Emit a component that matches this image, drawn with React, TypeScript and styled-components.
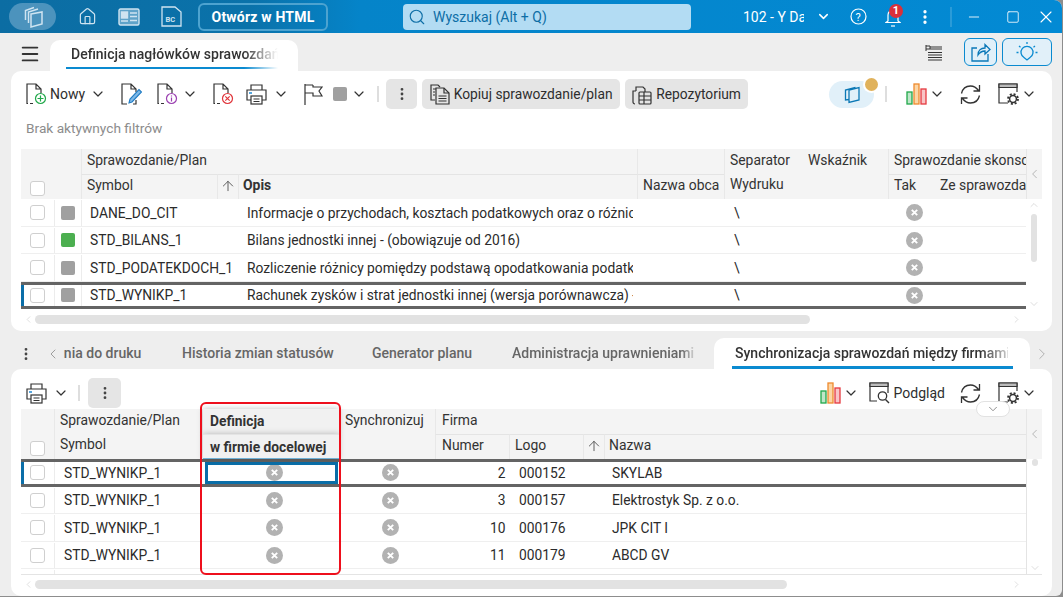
import React from "react";
import styled, { createGlobalStyle } from "styled-components";
import { ChevronDown, ChevronLeft, ChevronRight, ChevronUp, ArrowUp, Search, House, X, Minus, Square, EllipsisVertical, Menu } from "lucide-react";

const GlobalStyle = createGlobalStyle`
    html, body {
        margin: 0;
        padding: 0;
        background: #8d8d8d;
        font-family: Roboto, "Liberation Sans", sans-serif;
        font-size: 13px;
        color: #2b2b2b;
        overflow: hidden;
    }
    * { box-sizing: border-box; }
`;

const Win = styled.div`
    position: relative;
    width: 1062px;
    height: 596px;
    background: #eeeeee;
    border-top-right-radius: 8px;
    border-bottom-right-radius: 6px;
    overflow: hidden;
    display: flex;
    flex-direction: column;
`;

const TitleBar = styled.div`
    height: 33px;
    flex: none;
    display: flex;
    align-items: center;
    color: #fff;
    background: linear-gradient(90deg, #0c6da3 0, #0a72aa 250px, #0584c9 360px, #038ad4 100%);
`;
const LogoPill = styled.div`
    width: 47px;
    height: 27px;
    margin-left: 9px;
    border-radius: 14px;
    background: #4c93bd;
    display: flex;
    align-items: center;
    justify-content: center;
`;
const TitleIcon = styled.div<{ $ml: number }>`
    margin-left: ${({ $ml }) => $ml}px;
    display: flex;
    align-items: center;
`;
const HtmlButton = styled.div`
    margin-left: 16px;
    width: 130px;
    height: 28px;
    border: 2px solid #4da3d0;
    border-radius: 6px;
    display: flex;
    align-items: center;
    justify-content: center;
    font-size: 14px;
    font-weight: 700;
    letter-spacing: 0.2px;
`;
const SearchBox = styled.div`
    margin-left: 75px;
    width: 288px;
    height: 26px;
    border-radius: 4px;
    background: #b3dcf3;
    color: #0d6ea6;
    display: flex;
    align-items: center;
    gap: 7px;
    padding-left: 5px;
    font-size: 14px;
`;
const CompanyName = styled.div`
    margin-left: 52px;
    width: 61px;
    font-size: 14px;
    white-space: nowrap;
    overflow: hidden;
`;
const TitleSep = styled.div`
    width: 2px;
    height: 20px;
    margin-left: 16px;
    background: #2a9bd8;
`;
const Bell = styled.div`
    position: relative;
    margin-left: 18px;
    display: flex;
`;
const BellBadge = styled.span`
    position: absolute;
    top: -2px;
    left: 4px;
    width: 14px;
    height: 14px;
    border-radius: 50%;
    background: #d9303a;
    color: #fff;
    font-size: 11px;
    font-weight: 700;
    line-height: 14px;
    text-align: center;
`;

const TabStrip = styled.div`
    height: 38px;
    flex: none;
    display: flex;
    align-items: flex-end;
    position: relative;
`;
const BurgerSlot = styled.div`
    width: 50px;
    height: 31px;
    display: flex;
    justify-content: center;
    align-items: center;
    padding-bottom: 4px;
    padding-left: 9px;
`;
const MainTab = styled.div`
    width: 248px;
    height: 31px;
    background: #fff;
    border-radius: 10px 10px 0 0;
    padding: 0 20px 0 16px;
`;
const TabLabel = styled.div<{ $pl: number }>`
    height: 29px;
    line-height: 29px;
    font-size: 14px;
    font-weight: 500;
    color: #333;
    white-space: nowrap;
    overflow: hidden;
    padding: 0 6px 0 ${({ $pl }) => $pl}px;
    border-bottom: 2px solid #0a8ad0;
    -webkit-mask-image: linear-gradient(90deg, #000 84%, transparent 100%);
    mask-image: linear-gradient(90deg, #000 84%, transparent 100%);
`;
const ActiveLabel = styled(TabLabel)`
    -webkit-mask-image: none;
    mask-image: none;
    height: 31px;
    line-height: 31px;
    border-bottom-width: 3px;
`;
const FadedText = styled.span`
    display: block;
    width: 273px;
    overflow: hidden;
    -webkit-mask-image: linear-gradient(90deg, #000 90%, rgba(0, 0, 0, 0.25) 100%);
    mask-image: linear-gradient(90deg, #000 90%, rgba(0, 0, 0, 0.25) 100%);
`;
const TabActions = styled.div`
    margin-left: auto;
    margin-right: 10px;
    height: 33px;
    display: flex;
    align-items: flex-start;
    gap: 5px;
`;
const TabActionButton = styled.div<{ $w: number }>`
    width: ${({ $w }) => $w}px;
    height: 28px;
    border: 1px solid #0a8ad0;
    border-radius: 6px;
    background: #e1f0f9;
    display: flex;
    align-items: center;
    justify-content: center;
`;
const ListIconSlot = styled.div`
    margin-right: 16px;
    margin-top: 7px;
    display: flex;
`;

const Card = styled.div<{ $h: number; $pt: number }>`
    position: relative;
    flex: none;
    margin: 0 10px 0 11px;
    height: ${({ $h }) => $h}px;
    background: #fff;
    border-radius: 10px;
    padding: ${({ $pt }) => $pt}px 10px 0;
`;
const Toolbar = styled.div<{ $mb?: number }>`
    height: 30px;
    margin-bottom: ${({ $mb }) => $mb ?? 0}px;
    display: flex;
    align-items: center;
`;
const Tool = styled.div<{ $ml?: number }>`
    margin-left: ${({ $ml }) => $ml ?? 0}px;
    display: flex;
    align-items: center;
    font-size: 14px;
    white-space: nowrap;
    color: #2e2e2e;
`;
const ToolSep = styled.div<{ $ml: number }>`
    margin-left: ${({ $ml }) => $ml}px;
    width: 2px;
    height: 16px;
    background: #dedede;
`;
const GrayButton = styled.div<{ $ml: number; $w: number }>`
    margin-left: ${({ $ml }) => $ml}px;
    width: ${({ $w }) => $w}px;
    height: 30px;
    flex: none;
    border-radius: 5px;
    background: #e5e5e5;
    display: flex;
    align-items: center;
    justify-content: center;
    gap: 4px;
    font-size: 13.8px;
    color: #2e2e2e;
`;
const SwatchSquare = styled.div<{ $c: string }>`
    width: 14px;
    height: 14px;
    border-radius: 2px;
    background: ${({ $c }) => $c};
`;
const Spacer = styled.div`
    flex: 1;
`;
const ModePill = styled.div`
    position: relative;
    width: 45px;
    height: 27px;
    border-radius: 14px;
    background: #e1f0f9;
    display: flex;
    align-items: center;
    justify-content: center;
`;
const ModeDot = styled.span`
    position: absolute;
    top: -3px;
    right: -4px;
    width: 13px;
    height: 13px;
    border-radius: 50%;
    background: #e0b25c;
    box-shadow: 0 0 0 2px #fff;
`;
const FilterLine = styled.div`
    height: 40px;
    line-height: 38px;
    padding-left: 5px;
    font-size: 13.7px;
    color: #8c8c8c;
`;

const GridBox = styled.div`
    display: flex;
    flex-direction: column;
`;
const Head = styled.div<{ $cols: string }>`
    height: 50px;
    flex: none;
    display: grid;
    grid-template-columns: ${({ $cols }) => $cols};
    grid-template-rows: 25px 25px;
    background: #f4f4f4;
`;
const HeadCell = styled.div<{ $c: string; $r: string; $line?: boolean; $sep?: boolean; $pl?: number }>`
    grid-column: ${({ $c }) => $c};
    grid-row: ${({ $r }) => $r};
    min-width: 0;
    overflow: hidden;
    white-space: nowrap;
    padding-left: ${({ $pl }) => $pl ?? 5}px;
    line-height: ${({ $r }) => ($r === "2 / 3" ? 21 : 23)}px;
    font-size: 13.9px;
    color: #333;
    border-top: ${({ $line }) => ($line ? "1px solid #e4e4e4" : "none")};
    border-left: ${({ $sep }) => ($sep ? "1px solid #e8e8e8" : "none")};
`;
const StrongHead = styled.b`
    font-weight: 700;
`;
const SortArrow = styled(ArrowUp)`
    margin-top: 3px;
`;
const CheckHead = styled(HeadCell)`
    display: flex;
    align-items: flex-end;
    padding-bottom: 3px;
    padding-left: 0;
`;
const FocusedHead = styled(HeadCell)`
    position: relative;
    background: #f1f1f1;
    box-shadow: 0 0 6px rgba(0, 0, 0, 0.25);
    padding-left: 7px;
    font-size: 13.8px;
    line-height: 24px;
    font-weight: 700;
    border-bottom: ${({ $line }) => ($line ? "1px solid #6fb1d6" : "none")};
    z-index: 1;
`;
const CollapseCell = styled.div`
    grid-column: -2 / -1;
    grid-row: 1 / 3;
    display: flex;
    align-items: center;
    justify-content: center;
    background: #f4f4f4;
    border-left: 1px solid #e6e6e6;
`;
const Middle = styled.div<{ $h: number; $end?: boolean }>`
    height: ${({ $h }) => $h}px;
    display: flex;
    overflow: hidden;
    border-bottom: ${({ $end }) => ($end ? "1px solid #e4e4e4" : "none")};
`;
const Rows = styled.div`
    flex: 1;
    min-width: 0;
    overflow: hidden;
`;
const Row = styled.div<{ $cols: string; $sel?: boolean }>`
    position: relative;
    height: 27.5px;
    display: grid;
    grid-template-columns: ${({ $cols }) => $cols};
    align-items: center;
    padding-top: ${({ $sel }) => ($sel ? 0 : 1)}px;
    border-bottom: ${({ $sel }) => ($sel ? "3px solid #646464" : "1px solid #efefef")};
    border-top: ${({ $sel }) => ($sel ? "3px solid #646464" : "none")};
`;
const RowMark = styled.span`
    position: absolute;
    left: 0;
    top: 0;
    bottom: 0;
    width: 3px;
    background: #0a6ea8;
`;
const Cell = styled.div<{ $pl?: number; $mr?: number; $right?: boolean; $sep?: boolean; $span?: number }>`
    height: 100%;
    min-width: 0;
    display: flex;
    align-items: center;
    overflow: hidden;
    white-space: nowrap;
    font-size: 13.8px;
    color: #2b2b2b;
    grid-column: span ${({ $span }) => $span ?? 1};
    padding-left: ${({ $pl }) => $pl ?? 0}px;
    margin-right: ${({ $mr }) => $mr ?? 0}px;
    justify-content: ${({ $right }) => ($right ? "flex-end" : "flex-start")};
    border-left: ${({ $sep }) => ($sep ? "1px solid #ececec" : "none")};
`;
const CenterCell = styled(Cell)<{ $focus?: boolean }>`
    justify-content: center;
    padding-left: 6px;
    ${({ $focus }) => ($focus ? "outline: 3px solid #0a6ea8; outline-offset: -3px; margin: 0 1px 0 2px;" : "")}
`;
const CheckBox = styled.div`
    width: 15px;
    height: 15px;
    margin-left: 9px;
    border: 1px solid #cfcfcf;
    border-radius: 3px;
    background: #fff;
`;
const VBar = styled.div<{ $line?: boolean }>`
    width: 16px;
    flex: none;
    display: flex;
    flex-direction: column;
    align-items: center;
    justify-content: space-between;
    position: relative;
    border-left: ${({ $line }) => ($line ? "1px solid #e4e4e4" : "none")};
`;
const VThumb = styled.div<{ $h: number; $top: number }>`
    position: absolute;
    left: 5px;
    top: ${({ $top }) => $top}px;
    width: 6px;
    height: ${({ $h }) => $h}px;
    border-radius: 3px;
    background: #e2e2e2;
`;
const HBar = styled.div<{ $fill: number }>`
    margin-top: 5px;
    height: 9px;
    display: flex;
    align-items: center;
    position: relative;
    padding: 0 4px;
    &::before {
        content: "";
        display: block;
        width: ${({ $fill }) => $fill}px;
        height: 9px;
        margin-left: 10px;
        border-radius: 5px;
        background: #e2e2e2;
    }
`;
const HBarEnd = styled.span<{ $side: "l" | "r" }>`
    position: absolute;
    top: -1px;
    ${({ $side }) => ($side === "l" ? "left: 2px;" : "right: 20px;")}
    display: flex;
`;

const BottomTabs = styled.div`
    height: 38px;
    flex: none;
    display: flex;
    align-items: flex-end;
    padding-top: 7px;
`;
const DotsSlot = styled.div`
    width: 45px;
    height: 31px;
    padding-left: 18px;
    display: flex;
    align-items: center;
`;
const InactiveTab = styled.div<{ $w: number; $fade?: boolean }>`
    width: ${({ $w }) => $w}px;
    height: 31px;
    flex: none;
    line-height: 31px;
    font-size: 14px;
    font-weight: 500;
    color: #666;
    white-space: nowrap;
    overflow: hidden;
    ${({ $fade }) =>
        $fade
            ? "-webkit-mask-image: linear-gradient(90deg, #000 84%, transparent 92%); mask-image: linear-gradient(90deg, #000 84%, transparent 92%);"
            : ""}
`;
const ActiveTab = styled.div`
    width: 316px;
    height: 31px;
    flex: none;
    background: #fff;
    border-radius: 10px 10px 0 0;
    padding: 0 17px 0 18px;
`;
const ArrowSlot = styled.div<{ $w: number }>`
    width: ${({ $w }) => $w}px;
    height: 31px;
    flex: none;
    display: flex;
    align-items: center;
    justify-content: center;
`;
const RedFrame = styled.div`
    position: absolute;
    left: 189px;
    top: 33px;
    width: 141px;
    height: 173px;
    border: 2px solid #ee0f1c;
    border-radius: 6px;
    pointer-events: none;
    z-index: 3;
`;
const FoldTab = styled.div`
    position: absolute;
    left: 965px;
    top: 32px;
    width: 34px;
    height: 16px;
    border: 1px solid #e2e2e2;
    border-radius: 8px;
    background: #fff;
    display: flex;
    align-items: center;
    justify-content: center;
    z-index: 2;
`;
const ToolChevron = styled(ChevronDown)`
    margin: 0 -1px;
`;

/* drawings */
const InkProps = { fill: "none", stroke: "#333", strokeWidth: 1.2 };

const Stack = ({ c = "#0b78b5", s = 22 }: { c?: string; s?: number }) => (
    <svg width={s} height={s} viewBox="0 0 22 22" fill="none" stroke={c} strokeWidth="1.3">
        <path d="M8 7 18 4.5V17L8 19.5Z" />
        <path d="M8 16.5 4.5 17V7L14.5 4.5" />
    </svg>
);
const LogoIcon = () => (
    <svg width="24" height="24" viewBox="0 0 24 24" fill="none" stroke="#cfe4f1" strokeWidth="1.5">
        <path d="M10 9 21 7V19L10 22Z" />
        <path d="M7.5 18V7L17 4" />
        <path d="M4.5 15V5.5L13 2.5" />
    </svg>
);
const IdCardIcon = () => (
    <svg width="22" height="18" viewBox="0 0 22 18" fill="none" stroke="#cfe4f1" strokeWidth="1.4">
        <rect x="1" y="1" width="20" height="16" rx="1.5" fill="#5fa3c9" />
        <rect x="3.5" y="4" width="6" height="6" fill="#cfe4f1" />
        <path d="M3 13h7M12 5h7M12 8.5h7M12 12.5h7" />
    </svg>
);
const BcIcon = () => (
    <svg width="21" height="21" viewBox="0 0 21 21" fill="none" stroke="#cfe4f1" strokeWidth="1.3">
        <path d="M1 1h13l6 5v14H1Z" />
        <text x="4.5" y="15.5" fontSize="7.5" fontWeight="700" fill="#cfe4f1" stroke="none" fontFamily="Roboto">BC</text>
    </svg>
);
const HelpIcon = () => (
    <svg width="17" height="17" viewBox="0 0 17 17" fill="none" stroke="#fff" strokeWidth="1.2">
        <circle cx="8.5" cy="8.5" r="7.5" />
        <text x="5.6" y="12.5" fontSize="11" fill="#fff" stroke="none" fontFamily="Roboto">?</text>
    </svg>
);
const BellIcon = () => (
    <svg width="16" height="21" viewBox="0 0 16 21" fill="none" stroke="#fff" strokeWidth="1.2">
        <path d="M3 15V9a5 5 0 0 1 10 0v6l2 1.5H1Z" />
        <path d="M6 20h4" />
    </svg>
);
const BulbIcon = () => (
    <svg width="24" height="24" viewBox="0 0 24 24" fill="none" stroke="#0a8ad0" strokeWidth="1.3">
        <path d="M9 17.5A6 6 0 1 1 15 17.5L12 20Z" />
        <path d="M12 2v2M4 6l1.5 1.2M20 6l-1.5 1.2M1.5 12.5h2M20.5 12.5h2" />
    </svg>
);
const ShareIcon = () => (
    <svg width="20" height="20" viewBox="0 0 20 20" fill="none" stroke="#0a78b8" strokeWidth="1.3">
        <path d="M13 19H1V6h5M17 12v7h-4" />
        <path d="M7 13c0-5 3-7 7-7V2.5l5 5-5 4.5V9c-3 0-5 1-7 4Z" />
    </svg>
);
const ColumnsIcon = () => (
    <svg width="18" height="18" viewBox="0 0 18 18" fill="none" stroke="#333" strokeWidth="1">
        <path d="M1 0v6M1 1h4v3H1M5 2h12M5 4h12M3 7.5h14M3 10h14M3 12.5h14M3 15h14" />
    </svg>
);
const DocBase = () => <path d="M2 20.5H1V1h9l5 5v4M10 1v5h5M4 20.5h3" {...InkProps} />;
const DocNew = () => (
    <svg width="21" height="22" viewBox="0 0 21 22">
        <DocBase />
        <circle cx="14.5" cy="15.5" r="5" fill="none" stroke="#20a84a" strokeWidth="1.2" />
        <path d="M14.5 12.5v6M11.5 15.5h6" stroke="#20a84a" strokeWidth="1.2" />
    </svg>
);
const DocEdit = () => (
    <svg width="21" height="22" viewBox="0 0 21 22">
        <path d="M6 21H1V1h9l5 5v3M10 1v5h5M15 17v4h-3" {...InkProps} />
        <path d="M8 20l1-4L18 6.5l2.5 2.5L11 19Z" fill="#7fb8e6" stroke="#1f7cc4" strokeWidth="1.1" />
    </svg>
);
const DocInfo = () => (
    <svg width="21" height="22" viewBox="0 0 21 22">
        <DocBase />
        <circle cx="14.5" cy="15.5" r="5" fill="none" stroke="#9a3fb0" strokeWidth="1.2" />
        <path d="M14.5 14.5v4M14.5 12.5v1" stroke="#9a3fb0" strokeWidth="1.2" />
    </svg>
);
const DocDelete = () => (
    <svg width="21" height="22" viewBox="0 0 21 22">
        <DocBase />
        <circle cx="14.5" cy="15.5" r="5" fill="none" stroke="#e0353b" strokeWidth="1.2" />
        <path d="M12.3 13.3l4.4 4.4M16.7 13.3l-4.4 4.4" stroke="#e0353b" strokeWidth="1.2" />
    </svg>
);
const PrintIcon = () => (
    <svg width="21" height="21" viewBox="0 0 21 21" {...InkProps}>
        <path d="M5 6V1h11v5M5 16H1V6h19v10h-4" />
        <rect x="5" y="12" width="11" height="8" />
        <path d="M7.5 15h6M7.5 17.5h6" />
        <path d="M3 9h3" stroke="#2b8fd6" strokeWidth="1.6" />
    </svg>
);
const FlagIcon = () => (
    <svg width="19" height="21" viewBox="0 0 19 21" {...InkProps}>
        <path d="M1 0v21M1 1h8M9 1v2h9l-3 4 3 5H9V9H1" />
    </svg>
);
const CopyDocIcon = () => (
    <svg width="20" height="21" viewBox="0 0 20 21" {...InkProps}>
        <path d="M5 16H1V1h7l2 2" />
        <path d="M6 20V4h8l5 5v11Z" />
        <path d="M14 4v5h5M8.5 12h8M8.5 14.5h8M8.5 17h8M3 5h3M3 8h2M3 11h2" />
    </svg>
);
const RepoIcon = () => (
    <svg width="20" height="21" viewBox="0 0 20 21" {...InkProps}>
        <path d="M3 20a2 2 0 0 1-2-2V7h3M4 7V3h7l2 2v3" />
        <rect x="7" y="8" width="12" height="12" rx="1" />
        <path d="M7 12h12M7 16h12M12 8v12" />
    </svg>
);
const BarsIcon = () => (
    <svg width="21" height="22" viewBox="0 0 21 22" strokeWidth="1.3">
        <rect x="1" y="9" width="5" height="12" fill="#bfe6c9" stroke="#20a84a" />
        <rect x="8" y="1" width="5" height="20" fill="#fbd6a6" stroke="#ee8a2e" />
        <rect x="15" y="6" width="5" height="15" fill="#f8c4c6" stroke="#e5393f" />
    </svg>
);
const RefreshIcon = () => (
    <svg width="21" height="21" viewBox="0 0 21 21" {...InkProps} strokeWidth="1.3">
        <path d="M1.5 9.5C2.5 5 6 2 10.5 2c3.5 0 6 1.7 8 4.5M19.5 1v6h-6" />
        <path d="M19.5 11.5c-1 4.5-4.5 7.5-9 7.5-3.5 0-6-1.7-8-4.5M1.5 20v-6h6" />
    </svg>
);
const GearWindowIcon = () => (
    <svg width="21" height="22" viewBox="0 0 21 22" {...InkProps}>
        <path d="M10 20H1V1h18v8" />
        <path d="M1 1h18v3.5H1Z" fill="#bbb" />
        <circle cx="15" cy="16" r="3.4" strokeWidth="1.5" />
        <circle cx="15" cy="16" r="5" strokeWidth="1.8" strokeDasharray="2 1.93" />
    </svg>
);
const PreviewIcon = () => (
    <svg width="21" height="22" viewBox="0 0 21 22" {...InkProps}>
        <path d="M8 19H1V1h18v10" />
        <path d="M1 1h18v3.5H1Z" fill="#bbb" />
        <circle cx="13.5" cy="14" r="4.2" strokeWidth="1.3" />
        <path d="M16.5 17.5l3.5 3.5" strokeWidth="1.4" />
    </svg>
);
const Off = () => (
    <svg width="17" height="17" viewBox="0 0 17 17">
        <circle cx="8.5" cy="8.5" r="8.5" fill="#b2b2b2" />
        <path d="M5.8 5.8l5.4 5.4M11.2 5.8l-5.4 5.4" stroke="#fff" strokeWidth="1.9" />
    </svg>
);
const Chev = () => <ToolChevron size={16} strokeWidth={1.8} color="#333" />;
const Dots = () => <EllipsisVertical size={16} strokeWidth={2.2} color="#444" />;
const Collapse = () => <ChevronLeft size={22} strokeWidth={1.1} color="#999" />;

/* data */
const TOP_COLS = "33px 27px 136px 21px 399px 87px 76px 88px 46px 92px";
const TOP_HEAD_COLS = `${TOP_COLS} 16px`;
const BOTTOM_COLS = "33px 149px 136px 96px 74px 74px 21px 422px";
const BOTTOM_HEAD_COLS = `${BOTTOM_COLS} 16px`;

const reports = [
    { symbol: "DANE_DO_CIT", color: "#a0a0a0", text: "Informacje o przychodach, kosztach podatkowych oraz o różnicach między wynikiem" },
    { symbol: "STD_BILANS_1", color: "#4caf50", text: "Bilans jednostki innej - (obowiązuje od 2016)" },
    { symbol: "STD_PODATEKDOCH_1", color: "#a0a0a0", text: "Rozliczenie różnicy pomiędzy podstawą opodatkowania podatkiem dochodowym" },
    { symbol: "STD_WYNIKP_1", color: "#a0a0a0", text: "Rachunek zysków i strat jednostki innej (wersja porównawcza) - obowiązuje", selected: true },
];
const firms = [
    { number: "2", logo: "000152", name: "SKYLAB", selected: true },
    { number: "3", logo: "000157", name: "Elektrostyk Sp. z o.o." },
    { number: "10", logo: "000176", name: "JPK CIT I" },
    { number: "11", logo: "000179", name: "ABCD GV" },
];

export default function App() {
    return (
        <Win>
            <GlobalStyle />
            <TitleBar>
                <LogoPill><LogoIcon /></LogoPill>
                <TitleIcon $ml={22}><House size={19} strokeWidth={1.5} color="#cfe4f1" /></TitleIcon>
                <TitleIcon $ml={21}><IdCardIcon /></TitleIcon>
                <TitleIcon $ml={21}><BcIcon /></TitleIcon>
                <HtmlButton>Otwórz w HTML</HtmlButton>
                <SearchBox><Search size={18} strokeWidth={1.5} />Wyszukaj (Alt + Q)</SearchBox>
                <CompanyName>102 - Y Da</CompanyName>
                <TitleIcon $ml={12}><ChevronDown size={15} strokeWidth={2.4} color="#fff" /></TitleIcon>
                <TitleIcon $ml={19}><HelpIcon /></TitleIcon>
                <Bell>
                    <BellIcon />
                    <BellBadge>1</BellBadge>
                </Bell>
                <TitleIcon $ml={15}><EllipsisVertical size={18} strokeWidth={2.4} color="#fff" /></TitleIcon>
                <TitleSep />
                <TitleIcon $ml={14}><Minus size={16} strokeWidth={1.3} color="#fff" /></TitleIcon>
                <TitleIcon $ml={24}><Square size={14} strokeWidth={1.4} color="#fff" /></TitleIcon>
                <TitleIcon $ml={16}><X size={20} strokeWidth={1.3} color="#fff" /></TitleIcon>
            </TitleBar>

            <TabStrip>
                <BurgerSlot><Menu size={22} strokeWidth={2} color="#333" /></BurgerSlot>
                <MainTab><TabLabel $pl={5}>Definicja nagłówków sprawozdań</TabLabel></MainTab>
                <TabActions>
                    <ListIconSlot><ColumnsIcon /></ListIconSlot>
                    <TabActionButton $w={33}><ShareIcon /></TabActionButton>
                    <TabActionButton $w={50}><BulbIcon /></TabActionButton>
                </TabActions>
            </TabStrip>

            <Card $h={260} $pt={8}>
                <Toolbar>
                    <Tool $ml={5}><DocNew /></Tool>
                    <Tool $ml={3}>Nowy</Tool>
                    <Tool $ml={6}><Chev /></Tool>
                    <Tool $ml={16}><DocEdit /></Tool>
                    <Tool $ml={15}><DocInfo /></Tool>
                    <Tool $ml={5}><Chev /></Tool>
                    <Tool $ml={16}><DocDelete /></Tool>
                    <Tool $ml={12}><PrintIcon /></Tool>
                    <Tool $ml={7}><Chev /></Tool>
                    <Tool $ml={16}><FlagIcon /></Tool>
                    <Tool $ml={10}><SwatchSquare $c="#a0a0a0" /></Tool>
                    <Tool $ml={5}><Chev /></Tool>
                    <ToolSep $ml={11} />
                    <GrayButton $ml={7} $w={31}><Dots /></GrayButton>
                    <GrayButton $ml={5} $w={198}><CopyDocIcon />Kopiuj sprawozdanie/plan</GrayButton>
                    <GrayButton $ml={5} $w={123}><RepoIcon />Repozytorium</GrayButton>
                    <Spacer />
                    <ModePill><Stack /><ModeDot /></ModePill>
                    <ToolSep $ml={11} />
                    <Tool $ml={19}><BarsIcon /></Tool>
                    <Tool $ml={3}><Chev /></Tool>
                    <Tool $ml={16}><RefreshIcon /></Tool>
                    <Tool $ml={17}><GearWindowIcon /></Tool>
                    <Tool $ml={3}><Chev /></Tool>
                    <Tool $ml={6} />
                </Toolbar>
                <FilterLine>Brak aktywnych filtrów</FilterLine>
                <GridBox>
                    <Head $cols={TOP_HEAD_COLS}>
                        <CheckHead $c="1 / 2" $r="1 / 3"><CheckBox /></CheckHead>
                        <HeadCell $c="3 / 6" $r="1 / 2" $sep>Sprawozdanie/Plan</HeadCell>
                        <HeadCell $c="3 / 4" $r="2 / 3" $line $sep>Symbol</HeadCell>
                        <HeadCell $c="4 / 5" $r="2 / 3" $line $sep $pl={2}><SortArrow size={16} strokeWidth={1.4} color="#555" /></HeadCell>
                        <HeadCell $c="5 / 6" $r="2 / 3" $line $sep $pl={4}><StrongHead>Opis</StrongHead></HeadCell>
                        <HeadCell $c="6 / 7" $r="2 / 3" $line $sep>Nazwa obca</HeadCell>
                        <HeadCell $c="6 / 7" $r="1 / 2" $sep />
                        <HeadCell $c="7 / 8" $r="1 / 2" $sep>Separator</HeadCell>
                        <HeadCell $c="7 / 8" $r="2 / 3" $sep>Wydruku</HeadCell>
                        <HeadCell $c="8 / 9" $r="1 / 2" $pl={8}>Wskaźnik</HeadCell>
                        <HeadCell $c="9 / 11" $r="1 / 2" $sep>Sprawozdanie skonsolidowane</HeadCell>
                        <HeadCell $c="9 / 10" $r="2 / 3" $line $sep>Tak</HeadCell>
                        <HeadCell $c="10 / 11" $r="2 / 3" $line $pl={6}>Ze sprawozdania</HeadCell>
                        <CollapseCell><Collapse /></CollapseCell>
                    </Head>
                    <Middle $h={111}>
                        <Rows>
                            {reports.map((r) => (
                                <Row key={r.symbol} $cols={TOP_COLS} $sel={r.selected}>
                                    {r.selected && <RowMark />}
                                    <Cell><CheckBox /></Cell>
                                    <Cell $sep $pl={6}><SwatchSquare $c={r.color} /></Cell>
                                    <Cell $sep $pl={8} $span={2}>{r.symbol}</Cell>
                                    <Cell $pl={9} $mr={4}>{r.text}</Cell>
                                    <Cell />
                                    <Cell $pl={10}>\</Cell>
                                    <Cell />
                                    <Cell $pl={18}><Off /></Cell>
                                    <Cell />
                                </Row>
                            ))}
                        </Rows>
                        <VBar>
                            <ChevronUp size={12} strokeWidth={1} color="#bbb" />
                            <VThumb $h={48} $top={15} />
                            <ChevronDown size={12} strokeWidth={1} color="#bbb" />
                        </VBar>
                    </Middle>
                    <HBar $fill={775}>
                        <HBarEnd $side="l"><ChevronLeft size={11} strokeWidth={1} color="#bbb" /></HBarEnd>
                        <HBarEnd $side="r"><ChevronRight size={11} strokeWidth={1} color="#bbb" /></HBarEnd>
                    </HBar>
                </GridBox>
            </Card>

            <BottomTabs>
                <DotsSlot><Dots /></DotsSlot>
                <ArrowSlot $w={16}><ChevronLeft size={18} strokeWidth={1.2} color="#888" /></ArrowSlot>
                <InactiveTab $w={121}>&thinsp;nia do druku</InactiveTab>
                <InactiveTab $w={190}>Historia zmian statusów</InactiveTab>
                <InactiveTab $w={140}>Generator planu</InactiveTab>
                <InactiveTab $w={202} $fade>Administracja uprawnieniami</InactiveTab>
                <ActiveTab><ActiveLabel $pl={3}><FadedText>Synchronizacja sprawozdań między firmami</FadedText></ActiveLabel></ActiveTab>
                <ArrowSlot $w={24}><ChevronRight size={18} strokeWidth={1.2} color="#aaa" /></ArrowSlot>
            </BottomTabs>

            <Card $h={227} $pt={9}>
                <Toolbar $mb={1}>
                    <Tool $ml={5}><PrintIcon /></Tool>
                    <Tool $ml={7}><Chev /></Tool>
                    <ToolSep $ml={10} />
                    <GrayButton $ml={8} $w={33}><Dots /></GrayButton>
                    <Spacer />
                    <Tool><BarsIcon /></Tool>
                    <Tool $ml={3}><Chev /></Tool>
                    <Tool $ml={11}><PreviewIcon /></Tool>
                    <Tool $ml={4}>Podgląd</Tool>
                    <Tool $ml={15}><RefreshIcon /></Tool>
                    <Tool $ml={17}><GearWindowIcon /></Tool>
                    <Tool $ml={3}><Chev /></Tool>
                    <Tool $ml={6} />
                </Toolbar>
                <RedFrame />
                <FoldTab><ChevronDown size={14} strokeWidth={1.4} color="#777" /></FoldTab>
                <GridBox>
                    <Head $cols={BOTTOM_HEAD_COLS}>
                        <CheckHead $c="1 / 2" $r="1 / 3"><CheckBox /></CheckHead>
                        <HeadCell $c="2 / 3" $r="1 / 2" $sep>Sprawozdanie/Plan</HeadCell>
                        <HeadCell $c="2 / 3" $r="2 / 3" $sep>Symbol</HeadCell>
                        <FocusedHead $c="3 / 4" $r="1 / 2">Definicja</FocusedHead>
                        <FocusedHead $c="3 / 4" $r="2 / 3" $line>w firmie docelowej</FocusedHead>
                        <HeadCell $c="4 / 5" $r="1 / 2" $pl={6}>Synchronizuj</HeadCell>
                        <HeadCell $c="5 / 9" $r="1 / 2" $sep $pl={6}>Firma</HeadCell>
                        <HeadCell $c="5 / 6" $r="2 / 3" $line $sep $pl={6}>Numer</HeadCell>
                        <HeadCell $c="6 / 7" $r="2 / 3" $line $sep>Logo</HeadCell>
                        <HeadCell $c="7 / 8" $r="2 / 3" $line $sep $pl={2}><SortArrow size={16} strokeWidth={1.4} color="#555" /></HeadCell>
                        <HeadCell $c="8 / 9" $r="2 / 3" $line $sep $pl={4}>Nazwa</HeadCell>
                        <CollapseCell><Collapse /></CollapseCell>
                    </Head>
                    <Middle $h={116} $end>
                        <Rows>
                            {firms.map((f) => (
                                <Row key={f.logo} $cols={BOTTOM_COLS} $sel={f.selected}>
                                    {f.selected && <RowMark />}
                                    <Cell><CheckBox /></Cell>
                                    <Cell $sep $pl={9}>STD_WYNIKP_1</Cell>
                                    <CenterCell $focus={f.selected}><Off /></CenterCell>
                                    <CenterCell><Off /></CenterCell>
                                    <Cell $right>{f.number}&nbsp;</Cell>
                                    <Cell $pl={10}>{f.logo}</Cell>
                                    <Cell />
                                    <Cell $pl={8}>{f.name}</Cell>
                                </Row>
                            ))}
                            <Row $cols={BOTTOM_COLS}>
                                <Cell />
                                <Cell $sep />
                                <Cell />
                                <CenterCell><Off /></CenterCell>
                            </Row>
                        </Rows>
                        <VBar $line>
                            <VThumb $h={7} $top={0} />
                            <span />
                            <ChevronDown size={12} strokeWidth={1} color="#bbb" />
                        </VBar>
                    </Middle>
                    <HBar $fill={752}>
                        <HBarEnd $side="l"><ChevronLeft size={11} strokeWidth={1} color="#bbb" /></HBarEnd>
                        <HBarEnd $side="r"><ChevronRight size={11} strokeWidth={1} color="#bbb" /></HBarEnd>
                    </HBar>
                </GridBox>
            </Card>
        </Win>
    );
}
